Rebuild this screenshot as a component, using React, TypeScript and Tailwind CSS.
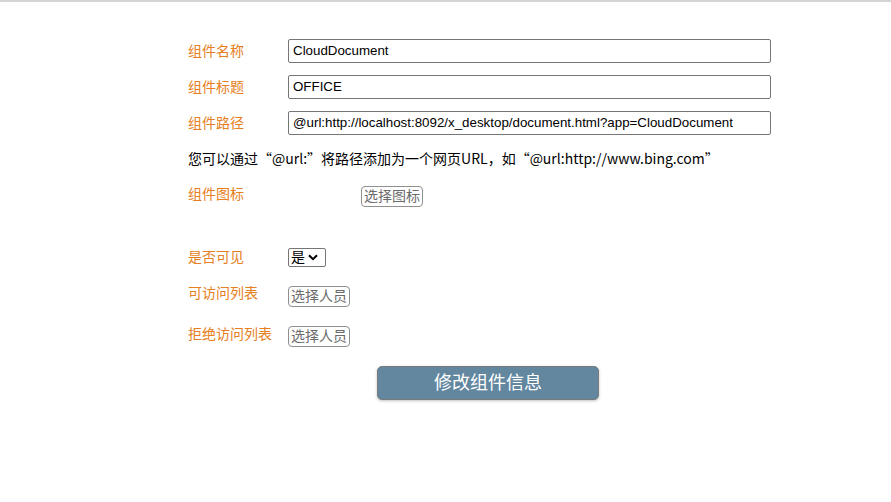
import { useState } from 'react';

const font = { fontFamily: '"Liberation Sans", "Noto Sans CJK SC", sans-serif' };

const Label = ({ text }: { text: string }) => <div className="w-[100px] shrink-0 text-[14px] leading-[20px] text-[#e67e22]">{text}</div>;

const PickButton = ({ text, className = '' }: { text: string; className?: string }) => (
  <button className={`h-[21px] px-[2px] text-[14px] leading-[17px] text-[#6b6b6b] bg-white border border-[#8f8f8f] rounded-[4px] ${className}`}>{text}</button>
);

export default function App() {
  const [name, setName] = useState('CloudDocument');
  const [title, setTitle] = useState('OFFICE');
  const [path, setPath] = useState('@url:http://localhost:8092/x_desktop/document.html?app=CloudDocument');

  return (
    <div className="min-h-[502px] bg-white border-t-2 border-[#d4d4d4]" style={font}>
      <div className="pl-[188px] pt-[37px]">
        <div className="flex items-center h-[24px]">
          <Label text="组件名称" />
          <input
            className="w-[483px] h-[24px] px-[4px] pb-[2px] text-[13.33px] text-black border border-[#767676] rounded-[2px] outline-none"
            value={name}
            onChange={(e) => setName(e.target.value)}
          />
        </div>
        <div className="flex items-center h-[24px] mt-[12px]">
          <Label text="组件标题" />
          <input
            className="w-[483px] h-[24px] px-[4px] pb-[2px] text-[13.33px] text-black border border-[#767676] rounded-[2px] outline-none"
            value={title}
            onChange={(e) => setTitle(e.target.value)}
          />
        </div>
        <div className="flex items-center h-[24px] mt-[12px]">
          <Label text="组件路径" />
          <input
            className="w-[483px] h-[24px] px-[4px] pb-[2px] text-[13.33px] text-black border border-[#767676] rounded-[2px] outline-none"
            value={path}
            onChange={(e) => setPath(e.target.value)}
          />
        </div>

        <p className="mt-[13px] h-[20px] text-[14px] leading-[20px] text-black font-['Noto_Sans_CJK_SC',sans-serif]">
          您可以通过“@url:”将路径添加为一个网页URL，如“@url:http://www.bing.com”
        </p>

        <div className="flex items-start mt-[16px]">
          <Label text="组件图标" />
          <PickButton text="选择图标" className="ml-[73px] mt-[2px]" />
        </div>

        <div className="flex items-center h-[20px] mt-[40px]">
          <Label text="是否可见" />
          <div className="flex items-center h-[19px] w-[38px] pl-[2px] border border-[#767676] rounded-[2px] text-[14px] text-black">
            <span className="leading-none">是</span>
            <svg className="ml-[3px]" width="10" height="7" viewBox="0 0 10 7">
              <path d="M1 1.2 L5 5.2 L9 1.2" fill="none" stroke="#000" strokeWidth="2" />
            </svg>
          </div>
        </div>

        <div className="flex items-start mt-[16px]">
          <Label text="可访问列表" />
          <PickButton text="选择人员" className="mt-[3px]" />
        </div>

        <div className="flex items-start mt-[17px]">
          <Label text="拒绝访问列表" />
          <PickButton text="选择人员" className="mt-[2px]" />
        </div>

        <button className="mt-[19px] ml-[189px] w-[222px] h-[34px] text-[18px] text-white bg-[#62879f] border border-[#7a7a7a] rounded-[5px] shadow-[0_1px_3px_rgba(0,0,0,0.25)]">
          修改组件信息
        </button>
      </div>
    </div>
  );
}
